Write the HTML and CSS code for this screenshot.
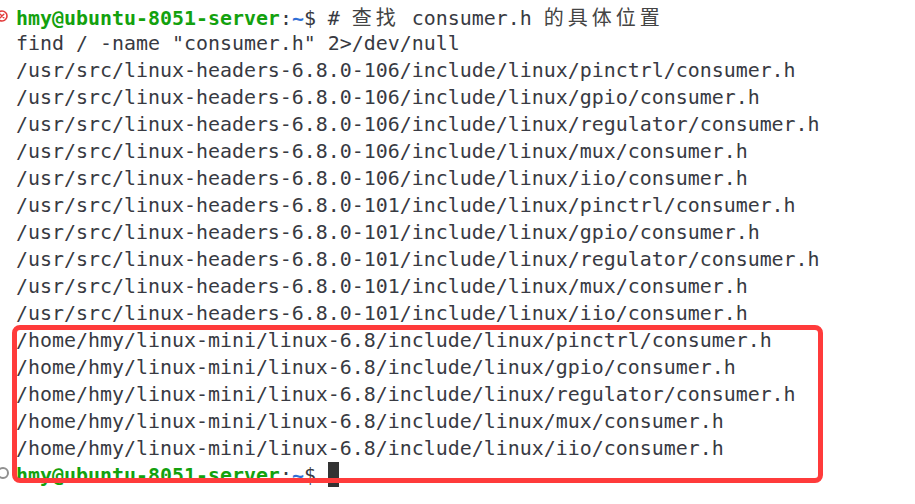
FILE: index.html
```html
<!DOCTYPE html>
<html>
<head>
<meta charset="utf-8">
<link rel="stylesheet" href="styles.css">
</head>
<body>
<div class="term">
  <div class="line"><svg class="mark mark-err" width="12" height="14" viewBox="0 0 12 14"><circle cx="4" cy="7" r="5" fill="none" stroke="#e23b3b" stroke-width="1.6"/><path d="M2.2 5.2 L5.8 8.8 M5.8 5.2 L2.2 8.8" stroke="#e23b3b" stroke-width="1.5" stroke-linecap="round"/></svg><span class="user">hmy@ubuntu-8051-server</span>:<span class="dir">~</span>$ # <span class="cjk">查找</span> consumer.h <span class="cjk">的具体位置</span></div>
  <div class="line">find / -name "consumer.h" 2&gt;/dev/null</div>
  <div class="line">/usr/src/linux-headers-6.8.0-106/include/linux/pinctrl/consumer.h</div>
  <div class="line">/usr/src/linux-headers-6.8.0-106/include/linux/gpio/consumer.h</div>
  <div class="line">/usr/src/linux-headers-6.8.0-106/include/linux/regulator/consumer.h</div>
  <div class="line">/usr/src/linux-headers-6.8.0-106/include/linux/mux/consumer.h</div>
  <div class="line">/usr/src/linux-headers-6.8.0-106/include/linux/iio/consumer.h</div>
  <div class="line">/usr/src/linux-headers-6.8.0-101/include/linux/pinctrl/consumer.h</div>
  <div class="line">/usr/src/linux-headers-6.8.0-101/include/linux/gpio/consumer.h</div>
  <div class="line">/usr/src/linux-headers-6.8.0-101/include/linux/regulator/consumer.h</div>
  <div class="line">/usr/src/linux-headers-6.8.0-101/include/linux/mux/consumer.h</div>
  <div class="line">/usr/src/linux-headers-6.8.0-101/include/linux/iio/consumer.h</div>
  <div class="line">/home/hmy/linux-mini/linux-6.8/include/linux/pinctrl/consumer.h</div>
  <div class="line">/home/hmy/linux-mini/linux-6.8/include/linux/gpio/consumer.h</div>
  <div class="line">/home/hmy/linux-mini/linux-6.8/include/linux/regulator/consumer.h</div>
  <div class="line">/home/hmy/linux-mini/linux-6.8/include/linux/mux/consumer.h</div>
  <div class="line">/home/hmy/linux-mini/linux-6.8/include/linux/iio/consumer.h</div>
  <div class="line"><span class="mark mark-idle"></span><span class="user">hmy@ubuntu-8051-server</span>:<span class="dir">~</span>$ <span class="cursor"></span></div>
  <div class="highlight"></div>
</div>
</body>
</html>
```

FILE: styles.css
```css
html, body {
  margin: 0;
  padding: 0;
  background: #ffffff;
}
.term {
  position: relative;
  width: 915px;
  height: 504px;
  overflow: hidden;
  box-sizing: border-box;
  padding: 2.5px 0 0 16px;
  font-family: "DejaVu Sans Mono", "Liberation Mono", monospace;
  font-size: 19.93px;
  color: #383a42;
}
.line {
  position: relative;
  height: 27px;
  line-height: 27px;
  white-space: pre;
}
.user {
  color: #13a10e;
  font-weight: bold;
}
.dir {
  color: #2f6fd6;
  font-weight: bold;
}
.cjk {
  font-family: "Noto Sans CJK SC", sans-serif;
  font-size: 20px;
  letter-spacing: 4px;
  color: #444;
}
.cursor {
  display: inline-block;
  width: 11px;
  height: 25px;
  background: #333333;
  vertical-align: top;
  margin-top: 0.5px;
}
.mark {
  position: absolute;
  z-index: 2;
}
.mark-err {
  top: 6px;
  left: -18px;
}
.mark-idle {
  display: block;
  top: 5px;
  left: -19px;
  width: 8px;
  height: 8px;
  border: 2px solid #909090;
  border-radius: 50%;
}
.highlight {
  position: absolute;
  left: 12px;
  top: 325px;
  width: 811px;
  height: 158px;
  box-sizing: border-box;
  border: 5px solid #ff3b3b;
  border-radius: 8px;
}
```
